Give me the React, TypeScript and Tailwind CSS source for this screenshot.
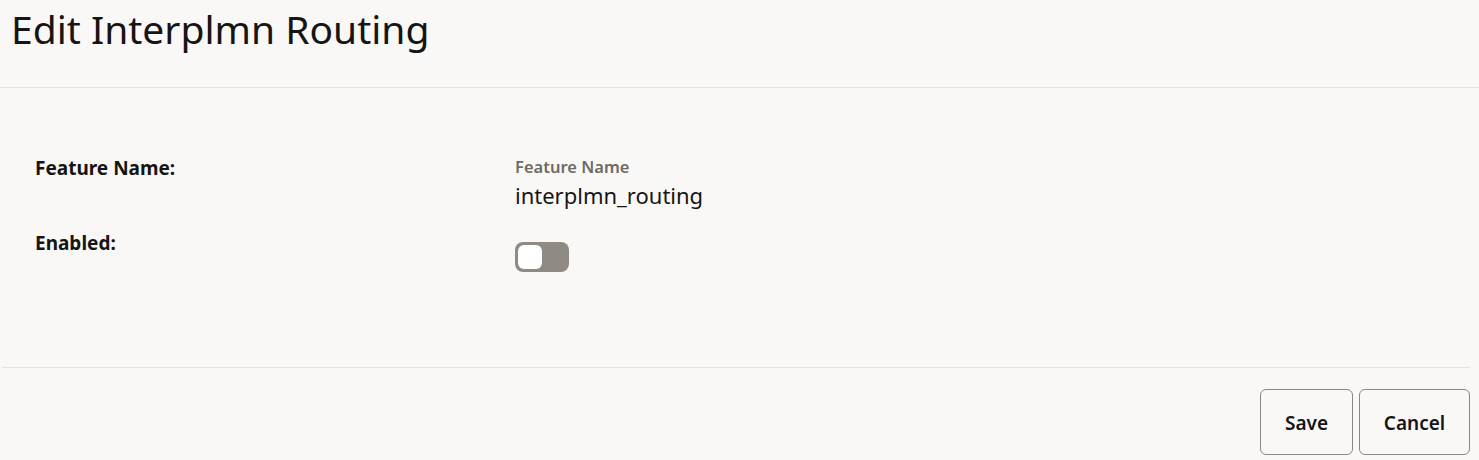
const App = () => {
  return (
    <div
      className="w-[1479px] h-[460px] bg-[#f9f8f6] text-[#161513] overflow-hidden flex flex-col"
      style={{ fontFamily: '"Noto Sans", "Open Sans", sans-serif' }}
    >
      {/* header */}
      <div className="h-[88px] border-b border-[#e4e2df] px-[11px] pt-[4px]">
        <h1 className="text-[39px] leading-[50px] font-normal">Edit Interplmn Routing</h1>
      </div>

      {/* form */}
      <div className="h-[279px] pt-[68px] pl-[35px] flex flex-col">
        <div className="flex">
          <div className="w-[480px] text-[19px] font-bold leading-[24px]">Feature Name:</div>
          <div className="flex flex-col">
            <span className="text-[16.5px] font-semibold text-[#6f6a64] leading-[22px]">Feature Name</span>
            <span className="text-[22px] leading-[34px]">interplmn_routing</span>
          </div>
        </div>
        <div className="flex mt-[19px]">
          <div className="w-[480px] text-[19px] font-bold leading-[24px]">Enabled:</div>
          <button className="w-[54px] h-[30px] rounded-[8px] bg-[#8f8a84] p-[3px] flex items-center mt-[11px]">
            <span className="w-[24px] h-[24px] rounded-[6px] bg-white block" />
          </button>
        </div>
      </div>

      {/* footer */}
      <div className="mx-[2px] mr-[9px] border-t border-[#e4e2df] flex justify-end gap-[6px] pt-[21px]">
        <button className="w-[93px] h-[66px] rounded-[6px] border border-[#8a8785] text-[19px] font-semibold pt-[3px]">
          Save
        </button>
        <button className="w-[111px] h-[66px] rounded-[6px] border border-[#8a8785] text-[19px] font-semibold pt-[3px]">
          Cancel
        </button>
      </div>
    </div>
  );
};

export default App;
